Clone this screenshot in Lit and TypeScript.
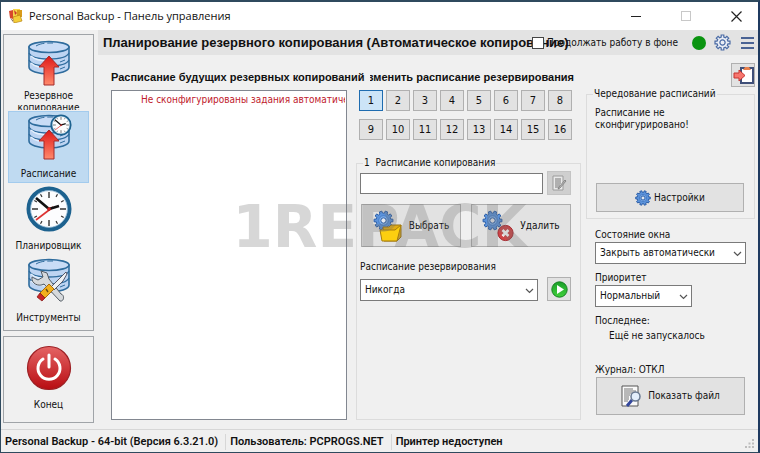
import { LitElement, html, css, svg, nothing } from "lit";
import { customElement, state } from "lit/decorators.js";
import { classMap } from "lit/directives/class-map.js";

/** Outline of a cogwheel around the origin. */
function cog(teeth: number, outer: number, inner: number): string {
  const step = (Math.PI * 2) / teeth;
  const at = (r: number, a: number) => `${(r * Math.cos(a)).toFixed(2)} ${(r * Math.sin(a)).toFixed(2)}`;
  let d = "";
  for (let i = 0; i < teeth; i++) {
    const a = i * step;
    d += `${i ? "L" : "M"}${at(inner, a - step * 0.3)}L${at(outer, a - step * 0.22)}L${at(outer, a + step * 0.22)}L${at(inner, a + step * 0.3)}`;
  }
  return d + "Z";
}

const cogShape = (x: number, y: number, r: number) => svg`
  <g transform="translate(${x} ${y})">
    <path d=${cog(10, r, r * 0.78)} fill="#5b93dc" stroke="#2d5fa8" stroke-width="1"/>
    <circle r=${r * 0.5} fill="#7fb0ec" stroke="#3a6fba" stroke-width=".7"/>
    <circle r=${r * 0.28} fill="#e3e8ef" stroke="#2d5fa8" stroke-width="1"/>
  </g>`;

const drum = svg`
  <path d="M2 7v20c0 4 9 7 20 7s20-3 20-7V7z" fill="#bdd4f2" stroke="#2f6c9d" stroke-width="1.6"/>
  <path d="M2 13c2 4 9 6 20 6s18-2 20-6M2 20c2 4 9 6 20 6s18-2 20-6" fill="none" stroke="#2f6c9d" stroke-width="1.3"/>
  <path d="M4 16c4 4 10 5 18 5M4 23c4 4 10 5 18 5" fill="none" stroke="#e6f0fc" stroke-width="1.2"/>
  <ellipse cx="22" cy="7" rx="20" ry="5.5" fill="#c9dcf6" stroke="#2f6c9d" stroke-width="1.6"/>
  <path d="M9 6c5-3 10-3 17-3" fill="none" stroke="#2f6c9d" stroke-width="1" stroke-dasharray="9 3"/>
  <path d="M33 22l5-2M33 29l5-2" stroke="#2f6c9d" stroke-width="1"/>`;

const arrow = svg`
  <linearGradient id="ar" x1="0" x2="0" y1="0" y2="1"><stop offset="0" stop-color="#e01818"/><stop offset="1" stop-color="#ff8a6c"/></linearGradient>
  <path d="M22 16l10 11h-5v18H17V27h-5z" fill="url(#ar)" stroke="#a32a2a" stroke-width="1"/>`;

const clockFace = svg`
  <circle r="20.5" fill="#fcfdfe" stroke="#1d628f" stroke-width="4"/>
  <circle r="18.4" fill="none" stroke="#8cb4d0" stroke-width=".8"/>
  <g stroke="#333" stroke-width="1.4"><path d="M0-17v6M0 17v-6M-17 0h6M17 0h-6"/>
  <path stroke-width="1.2" d="M8.5-14.7l-1.5 2.6M14.7-8.5l-2.6 1.5M14.7 8.5l-2.6-1.5M8.5 14.7l-1.5-2.6M-8.5 14.7l1.5-2.6M-8.5-14.7l1.5 2.6M-14.7 8.5l2.6-1.5M-14.7-8.5l2.6 1.5"/></g>
  <path d="M-13 11L4-2" stroke="#dd3333" stroke-width="1.6"/>
  <path d="M-13-11L0 0L10-3" fill="none" stroke="#111" stroke-width="2.6"/>
  <circle r="1.8" fill="#c22"/>`;

const icons = {
  backup: svg`<svg class="big" viewBox="-1 0 46 46">${drum}${arrow}</svg>`,
  schedule: svg`<svg class="big" viewBox="-1 0 46 46">${drum}${arrow}<g transform="translate(34 11) scale(.47)">${clockFace}</g></svg>`,
  planner: svg`<svg class="big" viewBox="0 0 46 46"><g transform="translate(23 23)">${clockFace}</g></svg>`,
  tools: svg`<svg class="big" viewBox="-1 0 46 46">${drum}
    <path d="M14 13l6 2 2 6 12 15c4 1 3 8-1 7l-16-17c-5 3-13 0-12-7l6 3 5-3z" fill="#d6d9dc" stroke="#555d66" stroke-width="1"/>
    <path d="M39 14l1 2-4 7-9 9-3-3 9-9z" fill="#eef0f3" stroke="#556" stroke-width="1"/>
    <path d="M22 26l5 5-9 9-5-5z" fill="#f2b01e" stroke="#a86c10" stroke-width="1"/>
    <path d="M19 31l2 3" stroke="#6b4a10" stroke-width="1.4"/>
    <path d="M13 35l5 5-3 3-5-4z" fill="#c92626" stroke="#8c1c1c" stroke-width=".8"/></svg>`,
  power: svg`<svg class="big" viewBox="0 0 46 46">
    <linearGradient id="pw" x1="0" x2="0" y1="0" y2="1"><stop offset="0" stop-color="#e46464"/><stop offset="1" stop-color="#b80c12"/></linearGradient>
    <circle cx="23" cy="23" r="21.5" fill="url(#pw)" stroke="#9c2024" stroke-width="1.2"/>
    <path d="M17 14a11 11 0 1 0 12 0M23 10v12" fill="none" stroke="#fff" stroke-width="3" stroke-linecap="round"/></svg>`,
  app: svg`<svg width="14" height="14" viewBox="0 0 14 14"><path d="M0 2l4-1v9l-3-1z" fill="#d8492c"/><path d="M4 0h7v8H4z" fill="#f6d64a"/><path d="M8 1h5v7H8z" fill="#d99b1b"/><path d="M5 1l3 3-2 2z" fill="#c9342a"/><path d="M4 8l7-2 2 6-8 2z" fill="#f4cf38" stroke="#b98410" stroke-width=".7"/><path d="M1 9l3 2v2z" fill="#8b6f5e"/></svg>`,
  outlineCog: svg`<svg width="17" height="17" viewBox="-8.5 -8.5 17 17"><path d=${cog(8, 7.6, 5.6)} fill="#e9edf5" stroke="#4a6ba5" stroke-width="1.2"/><circle r="2.6" fill="none" stroke="#4a6ba5" stroke-width="1.2"/></svg>`,
  menu: svg`<svg width="13" height="14" viewBox="0 0 13 14"><path d="M0 2h13M0 7h13M0 12h13" stroke="#4a6394" stroke-width="2"/></svg>`,
  clipboard: svg`<svg width="21" height="18" viewBox="0 0 21 18"><path d="M8 2h12v15H8z" fill="#fff" stroke="#3f4f78" stroke-width="2"/><path d="M10 4l2-3h4l2 3z" fill="#e8804c"/><path d="M1 7h5V4l6 5.500-6 5.500v-3H1z" fill="#f7766e" stroke="#c6332f" stroke-width="1"/></svg>`,
  edit: svg`<svg width="15" height="16" viewBox="0 0 15 16"><path d="M1 1h10v14H1z" fill="#e9e9e9" stroke="#9b9b9b"/><path d="M3 4h6M3 6h6M3 8h6M3 10h5M3 12h4" stroke="#777"/><path d="M13 5l1 1-6 7-2 1 1-2z" fill="#bbb" stroke="#777" stroke-width=".8"/></svg>`,
  choose: svg`<svg width="30" height="32" viewBox="0 0 30 32">${cogShape(10.5, 10.5, 9.5)}<path d="M10 17h6l2-2h10v12l-4 4H11z" fill="#e2ac12" stroke="#9b7410"/><path d="M7 20h15l6-5-4 16H9z" fill="#fccf10" stroke="#a77d0c"/></svg>`,
  remove: svg`<svg width="32" height="32" viewBox="0 0 32 32">${cogShape(10.5, 10.5, 9.5)}<circle cx="23.500" cy="23" r="7.600" fill="#cf4446" stroke="#a32a30"/><path d="M20.500 20l6 6m0-6l-6 6" stroke="#fff" stroke-width="2.600"/></svg>`,
  play: svg`<svg width="17" height="17" viewBox="0 0 17 17"><linearGradient id="pl" x1="0" x2="0" y1="0" y2="1"><stop offset="0" stop-color="#1b9f2a"/><stop offset="1" stop-color="#3fd03a"/></linearGradient><circle cx="8.500" cy="8.500" r="7.700" fill="url(#pl)" stroke="#158020"/><path d="M6 4l7 4.500-7 4.500z" fill="#fff"/></svg>`,
  settings: svg`<svg width="16" height="16" viewBox="0 0 16 16">${cogShape(8, 8, 7.3)}</svg>`,
  file: svg`<svg width="21" height="22" viewBox="0 0 21 22"><path d="M1 1h16v20H1z" fill="#fafafa" stroke="#555"/><path d="M3 4h9M3 6h12M3 8h12M3 10h6M3 12h5M3 14h5M3 16h4" stroke="#777"/><path d="M11 15l-5 6" stroke="#34479c" stroke-width="3"/><circle cx="14.500" cy="11.500" r="4.500" fill="#e3eefb" stroke="#687890" stroke-width="1.500"/></svg>`,
  grip: svg`<svg width="9" height="9" viewBox="0 0 9 9"><path d="M7 0h2v2H7zM7 3.500h2v2H7zM7 7h2v2H7zM3.500 3.500h2v2h-2zM3.500 7h2v2h-2zM0 7h2v2H0z" fill="#bdbdbd"/></svg>`,
};

const navItems = [
  { id: "backup", label: "Резервное копирование", icon: icons.backup },
  { id: "schedule", label: "Расписание", icon: icons.schedule },
  { id: "planner", label: "Планировщик", icon: icons.planner },
  { id: "tools", label: "Инструменты", icon: icons.tools },
];

@customElement("app-root")
export class AppRoot extends LitElement {
  @state() private page = "schedule";
  @state() private slotNo = 1;

  static styles = css`
    :host {
      display: flex;
      flex-direction: column;
      min-height: 100vh;
      box-sizing: border-box;
      position: relative;
      border: 1px solid #2f4a5e;
      border-top-width: 2px;
      border-right: 2px solid #1f3a60;
      background: #f0f0f0;
      color: #111;
      font: 10px/12px "DejaVu Sans Condensed", "DejaVu Sans", sans-serif;
    }
    * { box-sizing: border-box; }
    button, input, select { font: inherit; color: inherit; margin: 0; }
    button {
      display: flex; align-items: center; justify-content: center;
      padding: 0; border: 1px solid #b0b0b0; background: #e2e2e2; border-radius: 0;
    }
    svg { flex: none; display: block; }
    h1, h2, p { margin: 0; white-space: nowrap; }
    .title {
      display: flex; align-items: center; height: 28px; padding-left: 8px; gap: 6px;
      background: #fff; font-family: "Open Sans", "Noto Sans", sans-serif; font-size: 11px;
    }
    .title h1 { flex: 1; font: inherit; }
    .title button { width: 44px; height: 28px; border: 0; background: none; }
    .body { flex: 1; display: flex; gap: 4px; padding-left: 2px; }
    nav { width: 91px; display: flex; flex-direction: column; gap: 5px; padding: 4px 0 6px; }
    .box { border: 1px solid #a0a4a8; padding: 4px; display: flex; flex-direction: column; }
    .box.main { height: 297px; }
    .box.quit { flex: 1; padding-top: 5px; }
    .item {
      height: 72px; flex: none; width: 100%; flex-direction: column; justify-content: flex-start;
      border: 1px solid transparent; background: none; overflow: hidden; gap: 8px;
    }
    .item.on { background: #bfdaf1; border-color: #a3cbed; }
    .big { width: 46px; height: 46px; margin-top: 2px; }
    .item.wrap .big { margin-top: 0; }
    .item.wrap { gap: 4px; }
    .content { flex: 1; min-width: 0; display: flex; flex-direction: column; }
    .band { display: flex; align-items: center; height: 25px; padding: 0 4px 0 5px; background: #e3e3e3; }
    .band h2, h3 { font-family: "Liberation Sans", Arial, sans-serif; font-weight: bold; }
    .band h2 { flex: 1; min-width: 0; font-size: 13px; line-height: 20px; }
    .bg { display: flex; align-items: center; gap: 3px; white-space: nowrap; position: relative; }
    .bg input { appearance: none; width: 12px; height: 12px; border: 1px solid #444; background: #fff; }
    .dot { width: 14px; height: 14px; border-radius: 50%; background: #0a9410; margin: 0 8px 0 14px; }
    .tool { border: 0; background: none; }
    .tool + .tool { margin-left: 10px; }
    .cols { flex: 1; display: grid; grid-template-columns: 236px minmax(0, 1fr) 169px; padding: 8px 3px 9px 13px; }
    .left, .mid { display: flex; flex-direction: column; }
    h3 { margin: 0; height: 27px; padding-top: 6px; font-size: 11px; line-height: 16px; white-space: nowrap; }
    .mid h3 { display: flex; justify-content: flex-end; overflow: hidden; margin: 0 7px 0 14px; }
    .list { flex: 1; border: 1px solid #828790; background: #fff; padding: 3px 1px 3px 29px; overflow: hidden; }
    .list p { color: #c0202c; overflow: hidden; }
    .mid { padding: 0 5px 0 9px; }
    .slots { display: grid; grid-template-columns: repeat(8, 24px); gap: 8px 3px; padding-left: 3px; font-size: 11px; }
    .slots button { height: 21px; }
    .slots .on { background: #cce4f7; border-color: #1e6cb0; }
    fieldset { margin: 0; padding: 0; border: 1px solid #dcdcdc; min-width: 0; }
    legend { padding: 0 1px; margin-left: 6px; white-space: pre; }
    .job { flex: 1; margin-top: 17px; }
    .form { display: flex; flex-direction: column; padding: 2px 9px 0 3px; }
    .row { display: flex; align-items: flex-end; gap: 9px; }
    .row.top { gap: 4px; align-items: center; }
    .field { flex: 1; min-width: 0; height: 21px; border: 1px solid #7a7a7a; background: #fff; padding: 0 4px; }
    .sq { width: 24px; height: 24px; flex: none; }
    .sq.off { background: #cfcfcf; border-color: #c4c4c4; }
    .pair { display: flex; gap: 10px; padding-left: 1px; margin: 9px 0 14px; }
    .pair button { flex: 1; height: 43px; gap: 6px; border-color: #adadad; }
    .sel { position: relative; display: flex; flex: 1; min-width: 0; }
    .sel select {
      appearance: none; width: 100%; height: 22px; border: 1px solid #7a7a7a; border-radius: 0;
      background: #fff; padding: 0 16px 0 4px;
    }
    .sel svg { position: absolute; right: 4px; top: 9px; pointer-events: none; }
    .cap { display: block; height: 16px; line-height: 12px; }
    .right { display: flex; flex-direction: column; }
    .right > .sq { align-self: flex-end; }
    .turns { height: 131px; margin-top: 1px; }
    .turns .in { display: flex; flex-direction: column; justify-content: space-between; height: 118px; padding: 7px 10px 6px 8px; }
    .turns .in button { height: 29px; gap: 3px; margin-left: 1px; }
    .opts { display: flex; flex-direction: column; padding: 10px 9px 0 9px; }
    .opts .sel { flex: none; }
    .opts .cap { height: 13px; }
    .opts .wide { margin-bottom: 8px; }
    .opts .narrow { width: 97px; margin-bottom: 8px; }
    .opts .ran { padding-left: 14px; margin: 3px 0 22px; }
    .opts .show { height: 38px; gap: 6px; margin: 0 1px; }
    footer {
      display: flex; align-items: center; height: 23px; padding-top: 1px; border-top: 1px solid #d7d7d7;
      font: 600 11px/16px Roboto, sans-serif; white-space: nowrap;
    }
    footer span { padding: 0 7px 0 4px; border-right: 1px solid #d7d7d7; }
    footer span:last-of-type { flex: 1; border: 0; }
    footer svg { align-self: flex-end; margin: 0 4px 4px 0; }
    .mark {
      position: absolute; inset: 0; display: flex; align-items: center; justify-content: center;
      font: bold 58px/58px "DejaVu Sans", sans-serif; color: rgba(110, 110, 110, 0.28); pointer-events: none;
    }
  `;

  private select(id: string, value: string, cls = "") {
    return html`<div class="sel ${cls}">
      <select id=${id}><option>${value}</option></select>
      <svg width="9" height="6" viewBox="0 0 9 6"><path d="M1 1l3.500 3.500L8 1" fill="none" stroke="#555" stroke-width="1.200"/></svg>
    </div>`;
  }

  render() {
    return html`
      <header class="title">
        ${icons.app}
        <h1>Personal Backup - Панель управления</h1>
        <button aria-label="Свернуть"><svg width="10" height="10"><path d="M0 5.500h10" stroke="#222"/></svg></button>
        <button aria-label="Развернуть" disabled><svg width="10" height="10"><rect x=".5" y=".5" width="9" height="9" fill="none" stroke="#c8c8c8"/></svg></button>
        <button aria-label="Закрыть"><svg width="11" height="11"><path d="M.5.5l10 10m0-10l-10 10" stroke="#222" stroke-width="1.200"/></svg></button>
      </header>
      <div class="body">
        <nav>
          <div class="box main">
            ${navItems.map((n) => html`<button
              class=${classMap({ item: true, on: this.page === n.id, wrap: n.id === "backup" })}
              aria-current=${this.page === n.id ? "page" : nothing}
              @click=${() => (this.page = n.id)}>${n.icon}<span>${n.label}</span></button>`)}
          </div>
          <div class="box quit"><button class="item">${icons.power}<span>Конец</span></button></div>
        </nav>
        <div class="content">
          <div class="band">
            <h2>Планирование резервного копирования (Автоматическое копирование)</h2>
            <label class="bg"><input type="checkbox" />Продолжать работу в фоне</label>
            <span class="dot"></span>
            <button class="tool" aria-label="Параметры">${icons.outlineCog}</button>
            <button class="tool" aria-label="Меню">${icons.menu}</button>
          </div>
          <main class="cols">
            <section class="left">
              <h3>Расписание будущих резервных копирований</h3>
              <div class="list"><p>Не сконфигурированы задания автоматического копирования</p></div>
            </section>
            <section class="mid">
              <h3>Изменить расписание резервирования</h3>
              <div class="slots">
                ${Array.from({ length: 16 }, (_, i) => html`<button
                  class=${classMap({ on: this.slotNo === i + 1 })}
                  @click=${() => (this.slotNo = i + 1)}>${i + 1}</button>`)}
              </div>
              <fieldset class="job">
                <legend>${this.slotNo}  Расписание копирования</legend>
                <div class="form">
                  <div class="row top">
                    <input class="field" type="text" aria-label="Расписание копирования" />
                    <button class="sq off" aria-label="Изменить" disabled>${icons.edit}</button>
                  </div>
                  <div class="pair">
                    <button>${icons.choose}Выбрать</button>
                    <button>${icons.remove}Удалить</button>
                  </div>
                  <label class="cap" for="plan">Расписание резервирования</label>
                  <div class="row">
                    ${this.select("plan", "Никогда")}
                    <button class="sq" aria-label="Запустить">${icons.play}</button>
                  </div>
                </div>
              </fieldset>
            </section>
            <section class="right">
              <button class="sq" aria-label="Выход">${icons.clipboard}</button>
              <fieldset class="turns">
                <legend>Чередование расписаний</legend>
                <div class="in">
                  <p>Расписание не<br />сконфигурировано!</p>
                  <button>${icons.settings}Настройки</button>
                </div>
              </fieldset>
              <div class="opts">
                <label class="cap" for="win">Состояние окна</label>
                ${this.select("win", "Закрыть автоматически", "wide")}
                <label class="cap" for="prio">Приоритет</label>
                ${this.select("prio", "Нормальный", "narrow")}
                <p>Последнее:</p>
                <p class="ran">Ещё не запускалось</p>
                <p class="cap">Журнал: ОТКЛ</p>
                <button class="show">${icons.file}Показать файл</button>
              </div>
            </section>
          </main>
        </div>
      </div>
      <footer>
        <span>Personal Backup - 64-bit (Версия 6.3.21.0)</span>
        <span>Пользователь: PCPROGS.NET</span>
        <span>Принтер недоступен</span>
        ${icons.grip}
      </footer>
      <div class="mark" aria-hidden="true">1REPACK</div>
    `;
  }
}
